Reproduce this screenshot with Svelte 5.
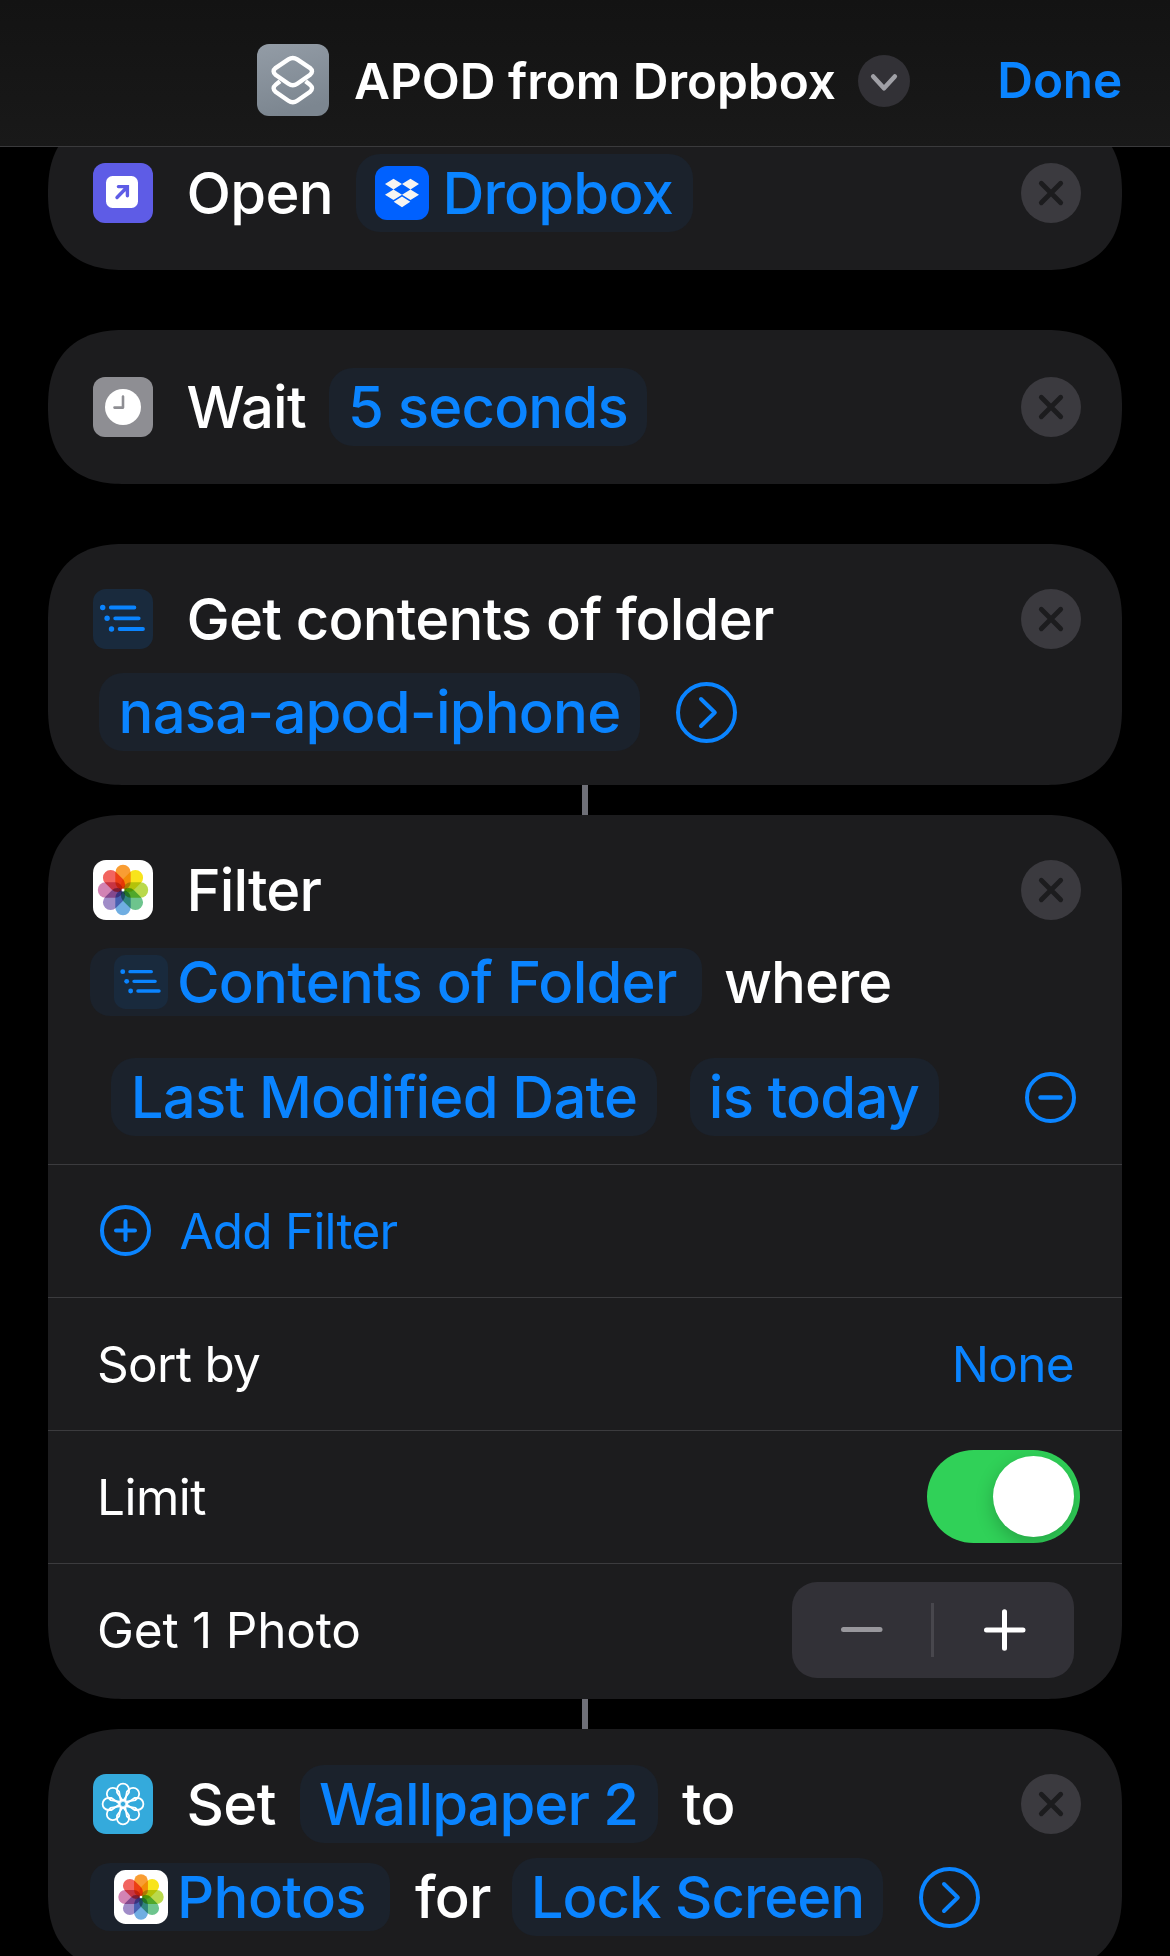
<script>
  const petals = [
    ['#f99d33', 0],
    ['#f8e41c', 45],
    ['#b9d94c', 90],
    ['#6dc48d', 135],
    ['#70aee2', 180],
    ['#a08cc8', 225],
    ['#d283b4', 270],
    ['#f2645f', 315]
  ];
  let limited = $state(true);
</script>

{#snippet remove()}
  <button class="remove" aria-label="Remove action">
    <svg viewBox="0 0 60 60"><circle cx="30" cy="30" r="30" fill="#3b3a3f" /><path d="M20.3 20.3 39.7 39.7M39.7 20.3 20.3 39.7" stroke="#1c1c1e" stroke-width="4.8" stroke-linecap="round" /></svg>
  </button>
{/snippet}

{#snippet more()}
  <svg class="more" viewBox="0 0 61 61" fill="none" stroke="#0a84ff" stroke-width="4" stroke-linecap="round" stroke-linejoin="round"><circle cx="30.5" cy="30.5" r="28.5" /><path d="M25 17 38.8 30.5 25 44" /></svg>
{/snippet}

{#snippet photos()}
  <svg class="icon" viewBox="0 0 60 60">
    <rect width="60" height="60" rx="13" fill="#fff" />
    <g class="petals">
      {#each petals as [color, angle]}
        <rect x="22.3" y="4.8" width="15.4" height="25" rx="7.7" fill={color} transform="rotate({angle} 30 30)" />
      {/each}
    </g>
    <circle cx="30" cy="30" r="1.5" fill="#fff" />
  </svg>
{/snippet}

{#snippet list()}
  <svg class="icon" viewBox="0 0 60 60">
    <rect width="60" height="60" rx="13" fill="#192a3d" />
    <g stroke="#0a84ff" stroke-width="3.8" stroke-linecap="round">
      <path d="M17.8 18.5H41.4M22.2 29.3H45.7M26.6 40H50" />
    </g>
    <g fill="#0a84ff"><circle cx="9.7" cy="18.5" r="2.7" /><circle cx="14.1" cy="29.3" r="2.7" /><circle cx="18.5" cy="40" r="2.7" /></g>
  </svg>
{/snippet}

<div class="screen">
  <header>
    <svg class="logo" viewBox="0 0 72 72">
      <defs><linearGradient id="slate" x1="0" y1="0" x2=".25" y2="1"><stop offset="0" stop-color="#939ca6" /><stop offset="1" stop-color="#7c8690" /></linearGradient></defs>
      <rect width="72" height="72" rx="12" fill="url(#slate)" />
      <g fill="none" stroke="#fff" stroke-width="4.4" stroke-linejoin="round">
        <path d="M23 37.2 18.8 40.6Q14.4 44.3 18.8 48L31.4 56.8Q35.8 59.8 40.2 56.8L52.8 48Q57.2 44.3 52.8 40.6L48.6 37.2" />
        <path d="M31.4 15.4Q35.8 12.4 40.2 15.4L52.8 23.8Q57.2 27.4 52.8 31L40.2 39.8Q35.8 42.8 31.4 39.8L18.8 31Q14.4 27.4 18.8 23.8Z" />
      </g>
    </svg>
    <h1>APOD from Dropbox</h1>
    <svg class="chevron" viewBox="0 0 52 52"><circle cx="26" cy="26" r="26" fill="#323136" /><path d="M15.2 21.5 26 33.2 36.8 21.5" fill="none" stroke="#a0a0a6" stroke-width="4.6" stroke-linecap="round" stroke-linejoin="round" /></svg>
    <a class="done" href="#done">Done</a>
  </header>

  <main>
    <section class="card">
      <div class="row head">
        <svg class="icon" viewBox="0 0 60 60"><rect width="60" height="60" rx="12" fill="#5e5ce6" /><rect x="13" y="13" width="32" height="32" rx="6.5" fill="#fff" /><path d="M24 34.5 34 24.3M25.4 23.6H34.4V32.8" fill="none" stroke="#5e5ce6" stroke-width="3.4" stroke-linecap="round" /></svg>
        <span class="text t-open">Open</span>
        <span class="pill p-dropbox">
          <svg class="app" viewBox="0 0 54 54"><rect width="54" height="54" rx="12" fill="#0061ff" /><path fill="#f7f5f2" d="M18.5 12.8 27 18.1 18.5 23.4 10 18.1ZM35.5 12.8 44 18.1 35.5 23.4 27 18.1ZM18.5 23.4 27 28.7 18.5 34 10 28.7ZM35.5 23.4 44 28.7 35.5 34 27 28.7ZM27 30.5 35.3 35.8 27 41.3 18.7 35.8Z" /></svg>
          <span>Dropbox</span>
        </span>
        {@render remove()}
      </div>
    </section>

    <section class="card spaced">
      <div class="row head">
        <svg class="icon" viewBox="0 0 60 60"><rect width="60" height="60" rx="12" fill="#8e8e93" /><circle cx="30" cy="30" r="18" fill="#fff" /><path d="M30 19.5V30.6H21.5" fill="none" stroke="#8e8e93" stroke-width="2.6" stroke-linecap="round" stroke-linejoin="round" /></svg>
        <span class="text t-wait">Wait</span>
        <span class="pill p-seconds">5 seconds</span>
        {@render remove()}
      </div>
    </section>

    <section class="card spaced">
      <div class="row head tall">
        {@render list()}
        <span class="text t-get">Get contents of folder</span>
        {@render remove()}
      </div>
      <div class="row folder">
        <span class="pill p-folder">nasa-apod-iphone</span>
        {@render more()}
      </div>
    </section>

    <div class="link"></div>

    <section class="card">
      <div class="row head tall">
        {@render photos()}
        <span class="text t-filter">Filter</span>
        {@render remove()}
      </div>
      <div class="row source">
        <span class="pill variable p-contents">{@render list()}<span>Contents of Folder</span></span>
        <span class="text t-where">where</span>
      </div>
      <div class="row rule">
        <span class="pill p-date">Last Modified Date</span>
        <span class="pill p-today">is today</span>
        <svg class="small minus" viewBox="0 0 51 51" fill="none" stroke="#0a84ff" stroke-width="4" stroke-linecap="round"><circle cx="25.5" cy="25.5" r="23.5" /><path d="M15.5 25.5H35.5" stroke-width="4.4" /></svg>
      </div>
      <div class="option">
        <svg class="small" viewBox="0 0 51 51" fill="none" stroke="#0a84ff" stroke-width="4" stroke-linecap="round"><circle cx="25.5" cy="25.5" r="23.5" /><path d="M16 25.5H35M25.5 16V35" /></svg>
        <span class="blue add">Add Filter</span>
      </div>
      <div class="option"><span>Sort by</span><span class="blue end">None</span></div>
      <div class="option">
        <span class="o-limit">Limit</span>
        <button class="toggle end" class:on={limited} onclick={() => (limited = !limited)} aria-label="Limit"><i></i></button>
      </div>
      <div class="option last">
        <span class="o-count">Get 1 Photo</span>
        <div class="stepper end">
          <svg viewBox="0 0 282 96" stroke-linecap="round"><path d="M51.5 47.5H88" stroke="#98979c" stroke-width="5" /><path d="M140.5 21V75" stroke="#48474d" stroke-width="3" stroke-linecap="butt" /><path d="M194.5 48H231M212.5 29.7V66.3" stroke="#fff" stroke-width="5" /></svg>
        </div>
      </div>
    </section>

    <div class="link"></div>

    <section class="card">
      <div class="row head tall">
        <svg class="icon" viewBox="0 0 60 60">
          <rect width="60" height="60" rx="13" fill="#34aadc" />
          <g fill="none" stroke="#fff" stroke-width="1.8" stroke-linejoin="round">
            {#each petals as [, angle]}
              <path d="M30 27 24 18.5V15.6A6 6 0 0 1 36 15.6V18.5Z" transform="rotate({angle} 30 30)" />
            {/each}
            <circle cx="30" cy="30" r="3.8" />
          </g>
        </svg>
        <span class="text t-set">Set</span>
        <span class="pill p-wallpaper">Wallpaper 2</span>
        <span class="text t-to">to</span>
        {@render remove()}
      </div>
      <div class="row target">
        <span class="pill variable p-photos">{@render photos()}<span>Photos</span></span>
        <span class="text t-for">for</span>
        <span class="pill p-lock">Lock Screen</span>
        {@render more()}
      </div>
    </section>
  </main>
</div>

<style>
  :global(body) { margin: 0; background: #000; }
  .screen {
    width: 1170px; height: 1956px; overflow: hidden; background: #000; color: #fff;
    font-family: Inter, "Liberation Sans", sans-serif; font-size: 58px; font-weight: 500;
    -webkit-font-smoothing: antialiased;
  }
  svg { display: block; flex: none; }
  button { padding: 0; border: 0; background: none; }

  header {
    position: relative; z-index: 1; box-sizing: border-box; height: 147px; padding: 14px 48px 0 257px;
    display: flex; align-items: center; background: linear-gradient(#131313, #191919); border-bottom: 1px solid #3a3a3c;
  }
  .logo { width: 72px; height: 72px; margin-top: -1px; }
  h1 { margin: 2px 0 0 25px; width: 503px; font-size: 49.5px; font-weight: 600; letter-spacing: -.05px; line-height: 60px; white-space: nowrap; }
  .chevron { width: 52px; height: 52px; margin: 1px 0 0 1px; }
  .done { margin-left: auto; color: #0a84ff; font-size: 49.5px; font-weight: 600; letter-spacing: -.2px; text-decoration: none; }

  main { margin: -31px 48px 0; }
  .card { background: #1c1c1e; border-radius: 64px; overflow: hidden; }
  @supports (corner-shape: superellipse(1.27)) {
    .card { border-radius: 77px; corner-shape: superellipse(1.27); }
  }
  .spaced { margin-top: 60px; }
  .link { width: 6px; height: 30px; margin: 0 auto; background: #6e6f77; }

  .row { display: flex; align-items: center; white-space: nowrap; }
  .head { height: 154px; padding: 0 41px 0 45px; }
  .tall { height: 60px; padding-top: 45px; }
  .icon { width: 60px; height: 60px; }
  .petals { isolation: isolate; }
  .petals rect { mix-blend-mode: multiply; }
  .remove { width: 60px; height: 60px; margin-left: auto; flex: none; }
  .more { width: 61px; height: 61px; margin-left: 36px; }
  .small { width: 51px; height: 51px; }
  .text { flex: none; letter-spacing: -.7px; }
  .head .text { margin-left: 33.5px; }

  .pill {
    flex: none; height: 78px; box-sizing: border-box; border-radius: 24px; background: #1b222c; color: #0a84ff;
    display: flex; align-items: center; justify-content: center; letter-spacing: -.8px;
  }
  .app { width: 54px; height: 54px; margin-right: 14px; }
  .variable { height: 68px; border-radius: 20px; justify-content: flex-start; padding-left: 24px; }
  .variable .icon { width: 54px; height: 54px; margin-right: 9px; }

  .t-open { width: 136px; }
  .p-dropbox { width: 337px; margin-left: 33px; justify-content: flex-start; padding-left: 19px; }
  .t-wait { width: 118px; }
  .p-seconds { width: 318px; margin-left: 24.5px; }
  .t-get { letter-spacing: -.82px; }
  .t-filter { letter-spacing: -.9px; }

  .folder { margin-top: 24px; padding: 0 0 34px 51px; }
  .p-folder { width: 541px; }

  .source { height: 68px; margin-top: 28px; padding-left: 42px; }
  .p-contents { width: 612px; letter-spacing: -.75px; }
  .t-where { margin-left: 22px; letter-spacing: -1px; }
  .rule { height: 78px; margin-top: 42px; padding: 0 46px 28px 63px; }
  .p-date { width: 546px; }
  .p-today { width: 249px; margin-left: 32.5px; }
  .minus { margin-left: auto; }

  .option {
    height: 132px; padding: 0 48px 0 49px; border-top: 1px solid #3b3b3e; display: flex; align-items: center;
    font-size: 49.5px; font-weight: 400; letter-spacing: -.7px;
  }
  .option .small { margin: -2px 0 0 3px; }
  .add { margin-left: 28.5px; letter-spacing: -.8px; }
  .blue { color: #0a84ff; }
  .end { margin-left: auto; }
  .last { height: 135px; }
  .o-limit { letter-spacing: -.5px; }
  .o-count { letter-spacing: -.2px; margin-top: -3px; }
  .toggle { position: relative; width: 153px; height: 93px; margin: -2px -6px 0 auto; border-radius: 47px; background: #39393d; overflow: hidden; }
  .toggle i { position: absolute; top: 6px; left: 6px; width: 81px; height: 81px; border-radius: 50%; background: #fff; box-shadow: 0 6px 18px rgba(0, 0, 0, .22); }
  .toggle.on { background: #30d158; }
  .toggle.on i { left: 66px; }
  .stepper { width: 282px; height: 96px; border-radius: 25px; background: #323137; margin-top: -3px; }

  .t-set { width: 87px; }
  .p-wallpaper { width: 358px; margin-left: 26px; letter-spacing: -1px; }
  .head .t-to { margin-left: 24.5px; }
  .target { margin-top: 24px; padding: 0 0 34px 42px; }
  .p-photos { width: 300px; letter-spacing: -.6px; }
  .t-for { margin-left: 25px; width: 73px; }
  .p-lock { width: 371px; margin-left: 24px; letter-spacing: -1px; }
</style>
